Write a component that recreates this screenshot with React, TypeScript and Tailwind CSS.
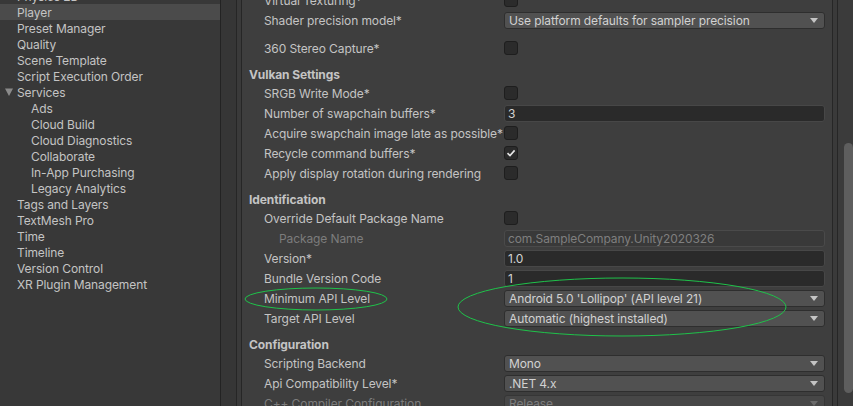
import React from "react";

const FONT = { fontFamily: "Inter, 'Noto Sans', sans-serif" };

function Check({ checked = false }: { checked?: boolean }) {
  return (
    <div className="w-[14px] h-[14px] rounded-[3px] bg-[#2b2b2b] border border-[#1e1e1e] flex items-center justify-center">
      {checked && (
        <svg width="10" height="10" viewBox="0 0 10 10">
          <path d="M1.5 5.2 L4 7.6 L8.6 2.4" fill="none" stroke="#e6e6e6" strokeWidth="1.6" />
        </svg>
      )}
    </div>
  );
}

function Dropdown({ value, disabled = false }: { value: string; disabled?: boolean }) {
  return (
    <div
      className={
        disabled
          ? "h-[17px] flex-1 rounded-[3px] border border-[#363636] bg-[#474747] pl-[4px] pr-[6px] flex items-center justify-between text-[#7d7d7d]"
          : "h-[17px] flex-1 rounded-[3px] border border-[#2e2e2e] bg-[#515151] pl-[4px] pr-[6px] flex items-center justify-between text-[#d2d2d2]"
      }
    >
      <span className="whitespace-nowrap leading-none pt-[2px]">{value}</span>
      <svg width="8" height="5" viewBox="0 0 8 5">
        <path d="M0 0 H8 L4 5 Z" fill={disabled ? "#6a6a6a" : "#c4c4c4"} />
      </svg>
    </div>
  );
}

function Field({ value, disabled = false }: { value: string; disabled?: boolean }) {
  return (
    <div
      className={
        disabled
          ? "h-[17px] flex-1 rounded-[3px] border border-[#4a4a4a] bg-[#393939] px-[3px] flex items-center text-[#7f7f7f]"
          : "h-[17px] flex-1 rounded-[3px] border border-[#474747] bg-[#2a2a2a] px-[3px] flex items-center text-[#d2d2d2]"
      }
    >
      <span className="whitespace-nowrap leading-none pt-[2px]">{value}</span>
    </div>
  );
}

function Row({
  label,
  children,
  indent = false,
  dim = false,
}: {
  label: string;
  children: React.ReactNode;
  indent?: boolean;
  dim?: boolean;
}) {
  return (
    <div className="h-[20px] flex items-center pl-[22px] pr-[7px]">
      <div
        className={
          "w-[240px] shrink-0 whitespace-nowrap pt-[2px] " +
          (indent ? "pl-[15px] " : "") +
          (dim ? "text-[#7c7c7c]" : "text-[#c4c4c4]")
        }
      >
        {label}
      </div>
      <div className="flex-1 flex items-center">{children}</div>
    </div>
  );
}

function Header({ title }: { title: string }) {
  return (
    <div className="mt-[6px] h-[19px] flex items-center pl-[7px] pt-[2px] font-bold text-[#c4c4c4]">{title}</div>
  );
}

const tree: { label: string; child?: boolean; selected?: boolean; arrow?: boolean }[] = [
  { label: "Physics 2D" },
  { label: "Player", selected: true },
  { label: "Preset Manager" },
  { label: "Quality" },
  { label: "Scene Template" },
  { label: "Script Execution Order" },
  { label: "Services", arrow: true },
  { label: "Ads", child: true },
  { label: "Cloud Build", child: true },
  { label: "Cloud Diagnostics", child: true },
  { label: "Collaborate", child: true },
  { label: "In-App Purchasing", child: true },
  { label: "Legacy Analytics", child: true },
  { label: "Tags and Layers" },
  { label: "TextMesh Pro" },
  { label: "Time" },
  { label: "Timeline" },
  { label: "Version Control" },
  { label: "XR Plugin Management" },
];

export default function App() {
  return (
    <div
      className="relative w-[853px] h-[406px] overflow-hidden flex bg-[#3e3e3e] text-[12px] leading-none tracking-[-0.1px]"
      style={FONT}
    >
      {/* Left tree */}
      <div className="w-[220px] shrink-0 bg-[#383838] overflow-hidden">
        <div className="-mt-[12px] flex flex-col">
          {tree.map((t) => (
            <div
              key={t.label}
              className={
                "relative h-[16px] flex items-center whitespace-nowrap text-[#c4c4c4] pt-[2px] " +
                (t.child ? "pl-[31px] " : "pl-[17px] ") +
                (t.selected ? "bg-[#4b4b4b]" : "")
              }
            >
              {t.arrow && (
                <svg className="absolute left-[5px] top-[4px]" width="8" height="8" viewBox="0 0 8 8">
                  <path d="M0 0.5 H8 L4 8 Z" fill="#8a8a8a" />
                </svg>
              )}
              {t.label}
            </div>
          ))}
        </div>
      </div>
      <div className="w-[1px] shrink-0 bg-[#232323]" />
      <div className="w-[15px] shrink-0 bg-[#363636]" />
      <div className="w-[1px] shrink-0 bg-[#262626]" />
      <div className="w-[4px] shrink-0 bg-[#3a3a3a]" />
      <div className="w-[1px] shrink-0 bg-[#262626]" />

      {/* Main inspector */}
      <div className="w-[590px] shrink-0 bg-[#3e3e3e] overflow-hidden">
        <div className="-mt-[10px] flex flex-col">
          <Row label="Virtual Texturing*">
            <Check />
          </Row>
          <Row label="Shader precision model*">
            <Dropdown value="Use platform defaults for sampler precision" />
          </Row>
          <div className="h-[8px]" />
          <Row label="360 Stereo Capture*">
            <Check />
          </Row>
          <Header title="Vulkan Settings" />
          <Row label="SRGB Write Mode*">
            <Check />
          </Row>
          <Row label="Number of swapchain buffers*">
            <Field value="3" />
          </Row>
          <Row label="Acquire swapchain image late as possible*">
            <Check />
          </Row>
          <Row label="Recycle command buffers*">
            <Check checked />
          </Row>
          <Row label="Apply display rotation during rendering">
            <Check />
          </Row>
          <Header title="Identification" />
          <Row label="Override Default Package Name">
            <Check />
          </Row>
          <Row label="Package Name" indent dim>
            <Field value="com.SampleCompany.Unity2020326" disabled />
          </Row>
          <Row label="Version*">
            <Field value="1.0" />
          </Row>
          <Row label="Bundle Version Code">
            <Field value="1" />
          </Row>
          <Row label="Minimum API Level">
            <Dropdown value="Android 5.0 'Lollipop' (API level 21)" />
          </Row>
          <Row label="Target API Level">
            <Dropdown value="Automatic (highest installed)" />
          </Row>
          <Header title="Configuration" />
          <Row label="Scripting Backend">
            <Dropdown value="Mono" />
          </Row>
          <Row label="Api Compatibility Level*">
            <Dropdown value=".NET 4.x" />
          </Row>
          <Row label="C++ Compiler Configuration" dim>
            <Dropdown value="Release" disabled />
          </Row>
        </div>
      </div>

      <div className="w-[1px] shrink-0 bg-[#262626]" />
      <div className="w-[4px] shrink-0 bg-[#3a3a3a]" />
      <div className="w-[1px] shrink-0 bg-[#262626]" />
      <div className="w-[15px] shrink-0 bg-[#3b3b3b] pt-[143px] pl-[6px]">
        <div className="w-[9px] h-[250px] rounded-[5px] bg-[#5e5e5e]" />
      </div>

      {/* Annotation ellipses */}
      <svg className="absolute inset-0 pointer-events-none" width="853" height="406" viewBox="0 0 853 406">
        <ellipse cx="316" cy="299" rx="71" ry="11" fill="none" stroke="#1fc24a" strokeWidth="1" />
        <ellipse cx="622" cy="307" rx="164" ry="29" fill="none" stroke="#1fc24a" strokeWidth="1" />
      </svg>
    </div>
  );
}
